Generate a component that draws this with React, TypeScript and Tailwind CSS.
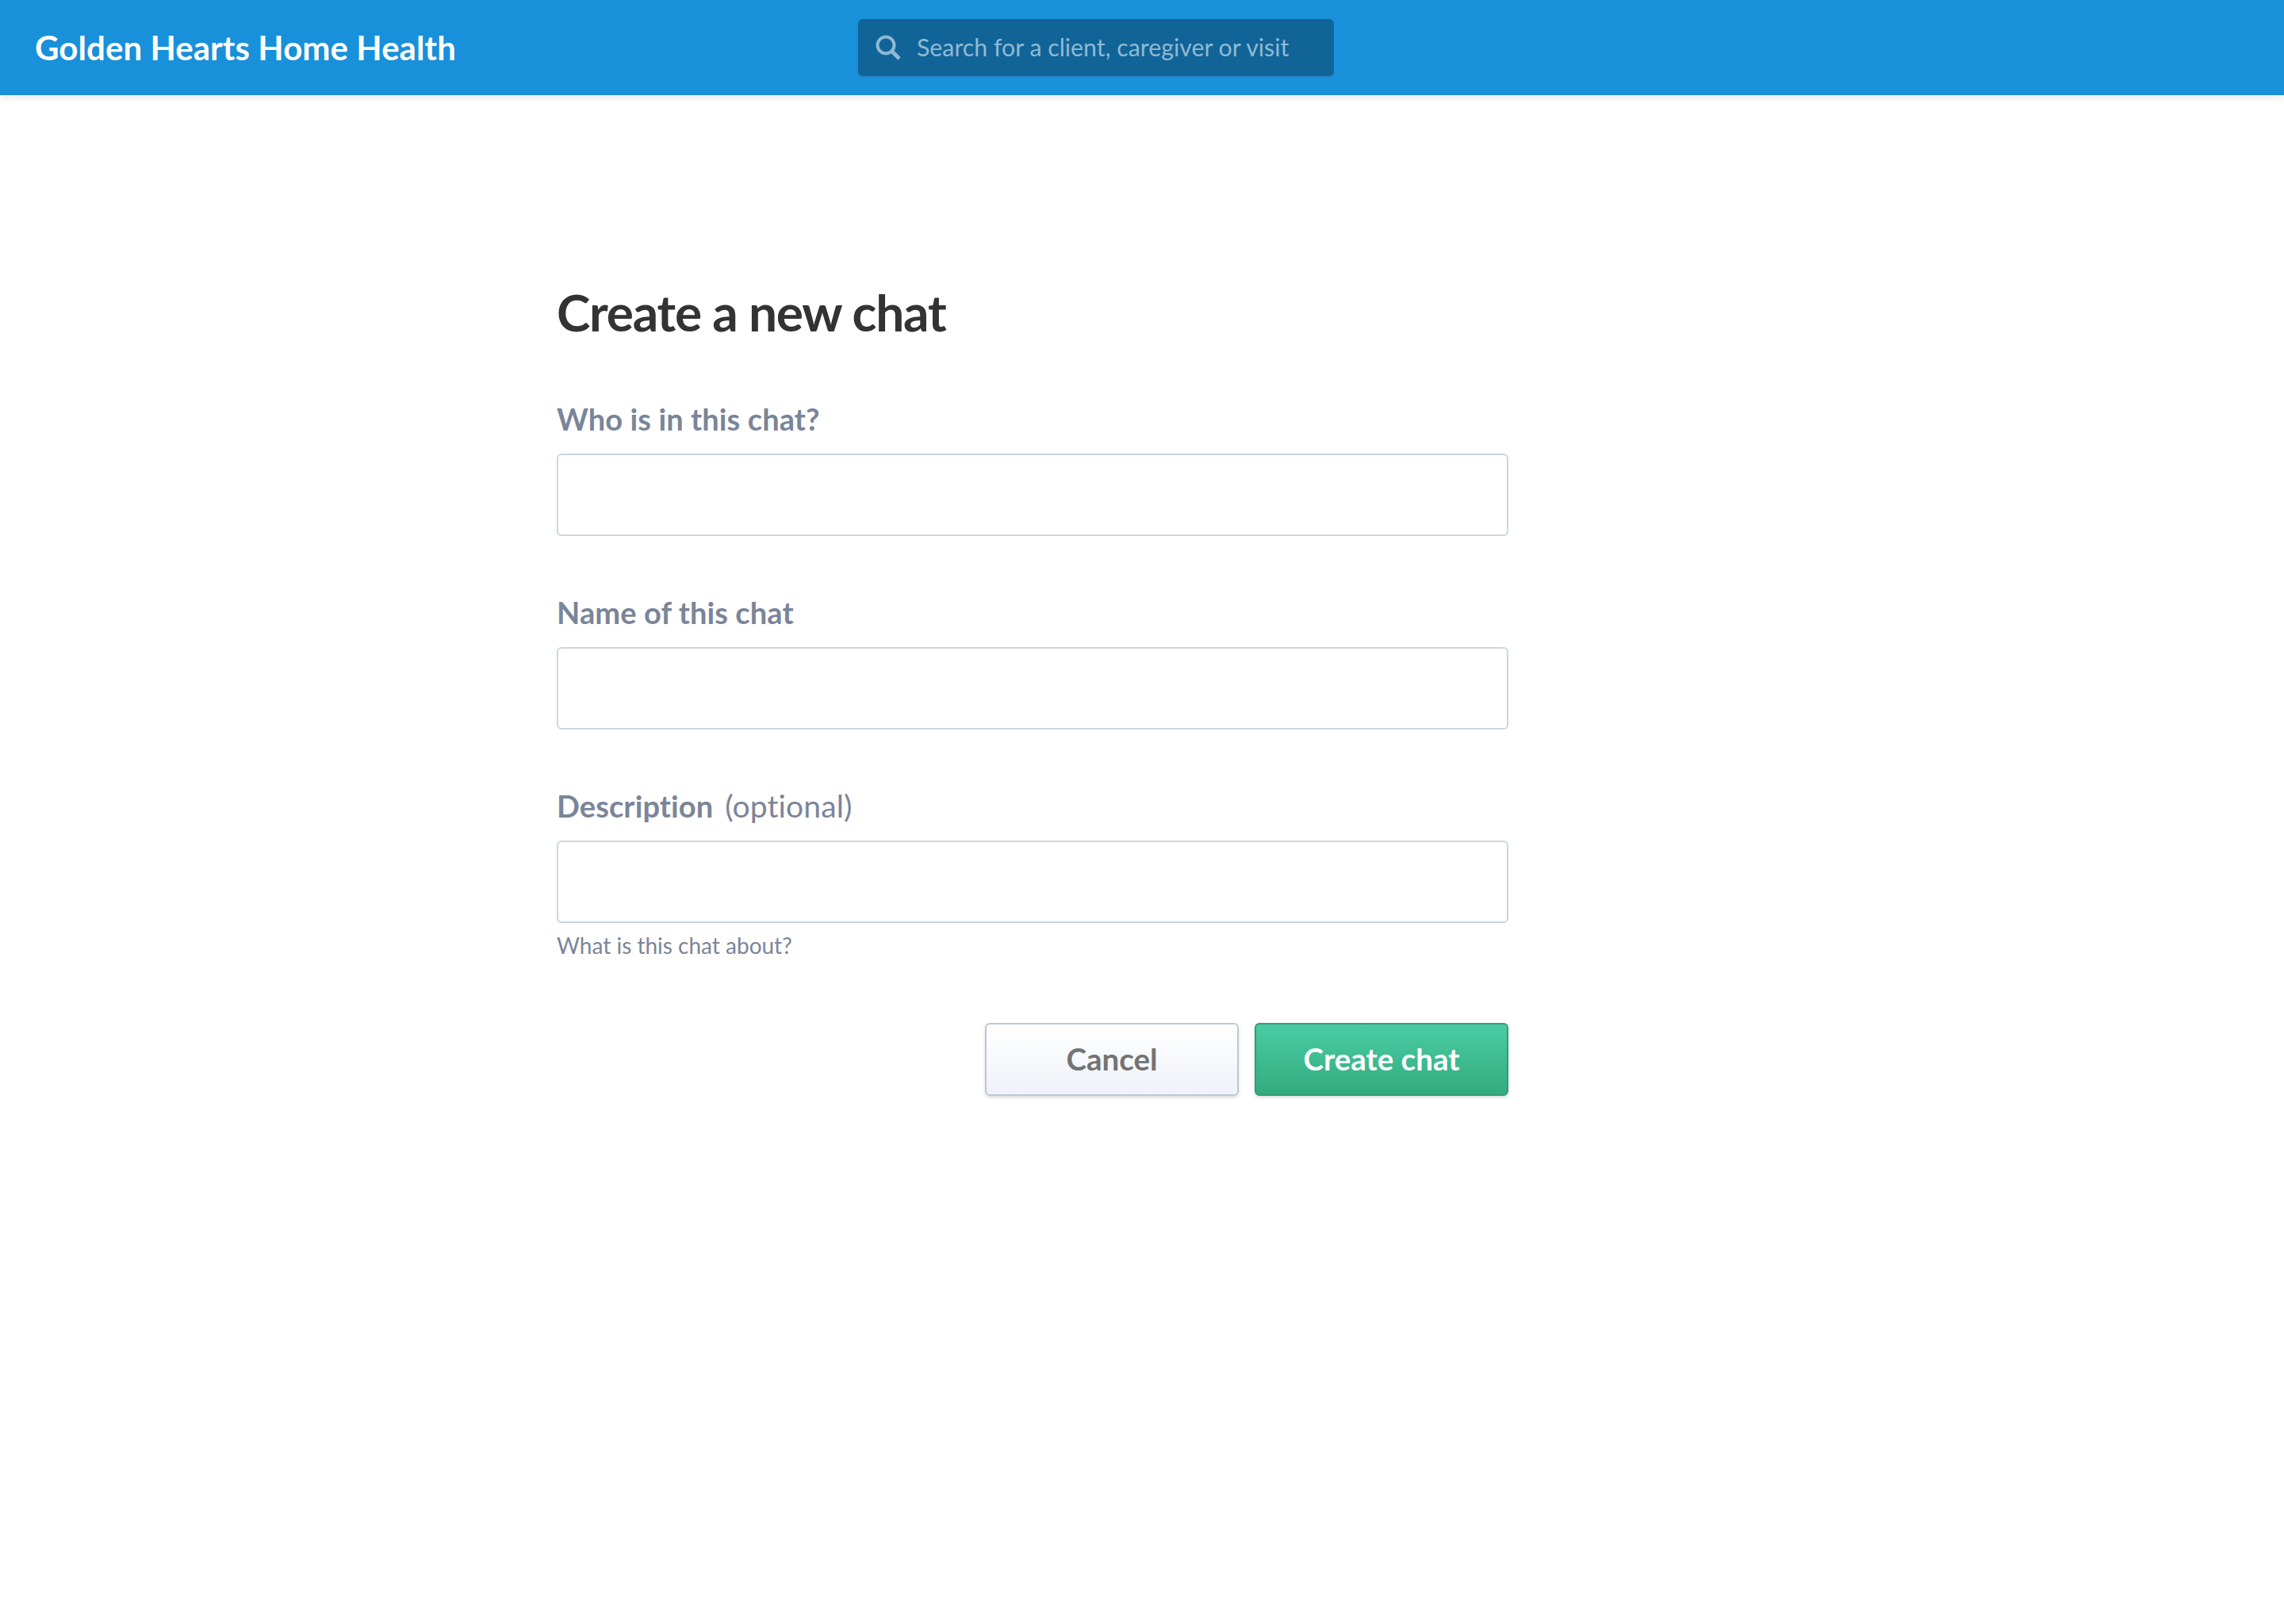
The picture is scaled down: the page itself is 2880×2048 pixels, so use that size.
import React from "react";

const font = { fontFamily: 'Lato, "Open Sans", sans-serif' };

function Field({ label, optional, hint }: { label: string; optional?: string; hint?: string }) {
  return (
    <div className="mb-[72px]">
      <label className="flex items-baseline gap-[15px] text-[38px] leading-[48px] font-bold text-[#7a8599] tracking-[0.1px] mb-[20px]">
        {label}
        {optional && <span className="text-[39px] font-normal">{optional}</span>}
      </label>
      <input className="block w-full h-[104px] rounded-[6px] border-2 border-[#c9d7e1] bg-white" />
      {hint && <p className="text-[28px] leading-[40px] mt-[8px] -mb-[18px] text-[#7a8599]">{hint}</p>}
    </div>
  );
}

export default function App() {
  return (
    <div style={font} className="min-h-screen bg-white">
      <header className="h-[120px] bg-[#1890da] flex items-center shadow-[0_3px_10px_rgba(0,0,0,0.1)]">
        <div className="pl-[44px] w-[1082px] text-[42px] font-bold text-white tracking-[0.07px]">
          Golden Hearts Home Health
        </div>
        <div className="w-[600px] h-[72px] rounded-[6px] bg-[#116498] shadow-[0_2px_0_#2b86c4] flex items-center pl-[22px] gap-[20px] text-[30.3px] text-[#8fb9d4]">
          <svg width="32" height="32" viewBox="0 0 32 32" fill="none" stroke="#8fb9d4">
            <circle cx="13" cy="13" r="10.5" strokeWidth="4" />
            <path d="M21 21l9 9" strokeWidth="5" />
          </svg>
          Search for a client, caregiver or visit
        </div>
      </header>
      <main className="ml-[702px] w-[1200px] pt-[232px]">
        <h1 className="text-[64px] leading-[84px] font-bold text-[#333333] tracking-[-1.2px] mb-[68px]">
          Create a new chat
        </h1>
        <Field label="Who is in this chat?" />
        <Field label="Name of this chat" />
        <Field label="Description" optional="(optional)" hint="What is this chat about?" />
        <div className="flex justify-end gap-[20px] mt-[96px]">
          <button className="w-[320px] h-[92px] rounded-[6px] border-2 border-[#bcc9d6] bg-gradient-to-b from-white to-[#eff2f9] text-[38.5px] font-bold text-[#737373] shadow-[0_2px_4px_rgba(0,0,0,0.15)]">
            Cancel
          </button>
          <button className="w-[320px] h-[92px] rounded-[6px] border-2 border-[#2f9e78] bg-gradient-to-b from-[#4accA3] to-[#33ab7f] text-[38.5px] font-bold text-white shadow-[0_2px_4px_rgba(0,0,0,0.15)]">
            Create chat
          </button>
        </div>
      </main>
    </div>
  );
}
